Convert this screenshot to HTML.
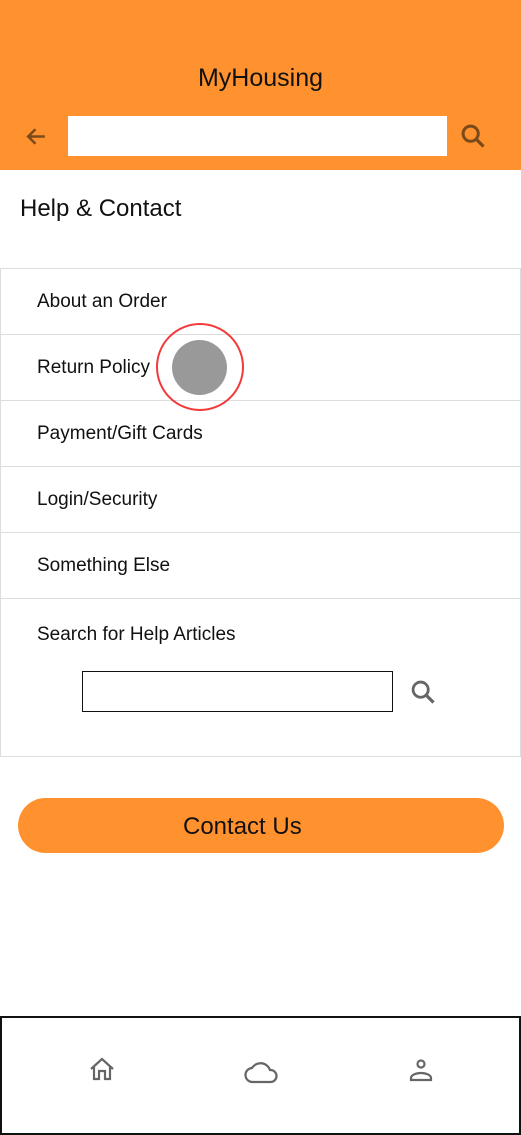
<!DOCTYPE html>
<html><head><style>
body{margin:0;width:521px;height:1127px;position:relative;background:#fff;font-family:"Liberation Sans",sans-serif;overflow:hidden}
.hdr{position:absolute;left:0;top:0;width:521px;height:170px;background:#FF922E}
.title{position:absolute;top:64px;width:521px;text-align:center;font-size:25px;color:#111}
.sb{position:absolute;left:68px;top:116px;width:379px;height:40px;background:#fff}
h1{position:absolute;left:20px;top:195px;margin:0;font-size:24px;font-weight:normal;color:#111}
.list{position:absolute;left:0;top:268px;width:519px;border:1px solid #ddd;border-bottom:none}
.it{height:65px;border-bottom:1px solid #ddd;font-size:19px;line-height:65px;padding-left:36px;color:#111}
.last{height:157px;border-bottom:1px solid #ddd;position:relative;font-size:19px;padding-left:36px;color:#111}
.btn{position:absolute;left:18px;top:798px;width:486px;height:55px;border-radius:28px;background:#FF922E;line-height:57px;font-size:24px;color:#111}
.nav{position:absolute;left:0;top:1016px;width:517px;height:115px;border:2px solid #111}
</style></head><body>
<div class="hdr">
<div class="title">MyHousing</div>
<svg style="position:absolute;left:24px;top:124px" width="25" height="25" viewBox="0 0 24 24"><path d="M20 12H5M11 5l-7 7 7 7" fill="none" stroke="#7a4a1a" stroke-width="2.4"/></svg>
<div class="sb"></div>
<svg style="position:absolute;left:458px;top:122px" width="30" height="28" viewBox="0 0 24 24"><circle cx="10" cy="10" r="6.5" fill="none" stroke="#7a4a1a" stroke-width="2.6"/><path d="M15 15l6 6" stroke="#7a4a1a" stroke-width="2.8"/></svg>
</div>
<h1>Help &amp; Contact</h1>
<div class="list">
<div class="it">About an Order</div>
<div class="it">Return Policy</div>
<div class="it">Payment/Gift Cards</div>
<div class="it">Login/Security</div>
<div class="it">Something Else</div>
<div class="last"><div style="position:absolute;top:25px">Search for Help Articles</div>
<div style="position:absolute;left:81px;top:72px;width:309px;height:39px;border:1.5px solid #111"></div>
<svg style="position:absolute;left:407px;top:79px" width="30" height="28" viewBox="0 0 24 24"><circle cx="10" cy="10" r="6.5" fill="none" stroke="#666" stroke-width="2.4"/><path d="M15 15l6 6" stroke="#666" stroke-width="2.8"/></svg>
</div>
</div>
<div style="position:absolute;left:156px;top:323px;width:84px;height:84px;border:2px solid #f23a3a;border-radius:50%"></div>
<div style="position:absolute;left:172px;top:340px;width:55px;height:55px;background:#999;border-radius:50%"></div>
<div class="btn"><span style="position:absolute;left:165px">Contact Us</span></div>
<div class="nav">
<svg style="position:absolute;left:86px;top:38px" width="28" height="28" viewBox="0 0 28 28"><path d="M3 13L14 3l11 10M6 11v12h5v-8h6v8h5V11" fill="none" stroke="#666" stroke-width="2.2" stroke-linejoin="miter"/></svg>
<svg style="position:absolute;left:242px;top:42px" width="36" height="24" viewBox="0 0 36 24"><path d="M9 22a7 7 0 0 1-1-14 10 10 0 0 1 18 2 6 6 0 0 1 1 12z" fill="none" stroke="#666" stroke-width="2.2"/></svg>
<svg style="position:absolute;left:406px;top:38px" width="26" height="28" viewBox="0 0 26 28"><circle cx="13" cy="8" r="3.5" fill="none" stroke="#666" stroke-width="2.2"/><path d="M3 24v-2c0-3 5-5 10-5s10 2 10 5v2z" fill="none" stroke="#666" stroke-width="2.2"/></svg>
</div>
</body></html>
